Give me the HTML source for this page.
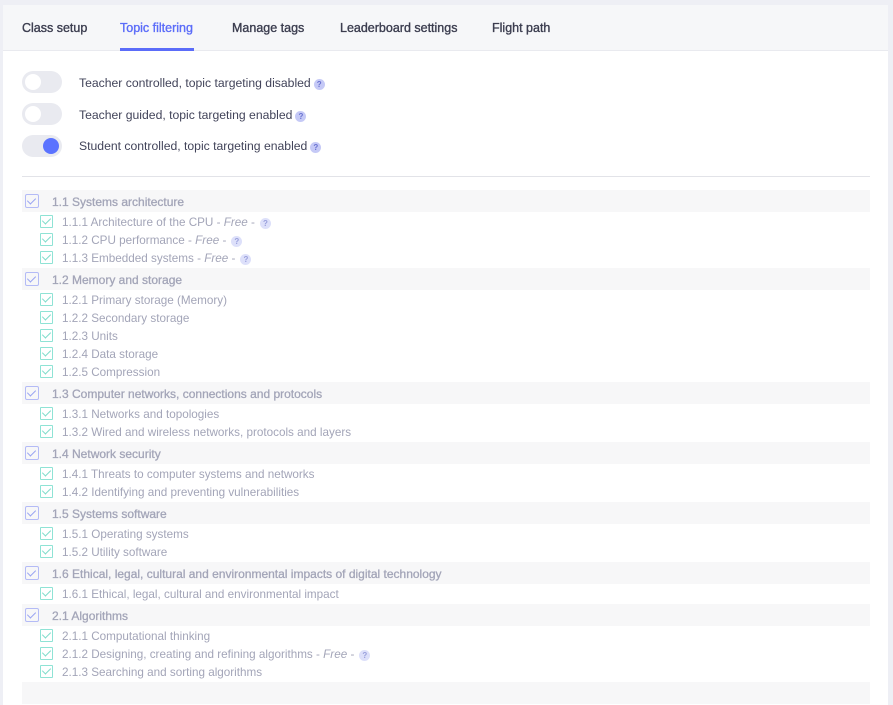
<!DOCTYPE html>
<html><head><style>
*{margin:0;padding:0;box-sizing:border-box}
body{width:893px;height:683px;overflow:hidden;background:#eeeff5;font-family:"Liberation Sans",sans-serif}
.card{position:absolute;left:3px;top:5px;width:885px;height:700px;background:#fff}
.tabs{height:46px;background:#f6f7f9;border-bottom:1px solid #e9eaef;position:relative}
.tab{position:absolute;top:16px;font-size:12.5px;color:#3b3d4f;-webkit-text-stroke:0.35px #3b3d4f}
.tab.a{color:#5b6cf9;-webkit-text-stroke:0.35px #5b6cf9}
.ul{position:absolute;left:117px;top:43px;width:74px;height:3px;background:#5b6cf9}
.tg{position:absolute;left:19px;width:40px;height:22px;border-radius:11px;background:#e9eaf0}
.tg i{position:absolute;left:3px;top:3px;width:16px;height:16px;border-radius:50%;background:#fff}
.tg.on i{left:21px;background:#5b73ff}
.lb{position:absolute;left:76px;font-size:12.2px;color:#42445a}
.q{display:inline-block;width:11px;height:11px;border-radius:50%;background:#c5c9f6;color:#6a72d0;font-size:8px;font-weight:bold;text-align:center;line-height:11px;vertical-align:0px;margin-left:3px;font-style:normal}
.hr{position:absolute;left:19px;top:171px;width:848px;height:1px;background:#e2e3e8}
.list{position:absolute;left:19px;top:184px;width:848px}
.h{height:22px;margin:1px 0;background:#f7f7f8;position:relative;font-size:12px;color:#a3a5b8;-webkit-text-stroke:0.3px #a3a5b8;line-height:24px;padding-left:30px}
.h b{position:absolute;left:3px;top:4px;width:14px;height:14px;border:1.5px solid #b4bbf6;border-radius:2px;-webkit-text-stroke:0}
.c{height:18px;position:relative;padding-left:40px;font-size:11.7px;color:#a3a5b8;line-height:20px}
.c b{position:absolute;left:18px;top:2px;width:13px;height:13px;border:1.5px solid #8fe3d5;border-radius:1px}
b::after{content:"";position:absolute;left:3px;top:1px;width:4px;height:7px;border:solid;border-width:0 1.5px 1.5px 0;transform:rotate(45deg)}
.h b::after{border-color:#9aa5f2}
.c b::after{border-color:#7fdccb;left:3px;top:0px}
.c .q,.h .q{background:#dde0fa;color:#9aa0dc;margin-left:5px}
</style></head><body>
<div class="card">
<div class="tabs">
<div class="tab" style="left:19px">Class setup</div>
<div class="tab a" style="left:117px">Topic filtering</div>
<div class="tab" style="left:229px">Manage tags</div>
<div class="tab" style="left:337px">Leaderboard settings</div>
<div class="tab" style="left:489px">Flight path</div>
<div class="ul"></div>
</div>
<div class="tg" style="top:66px"><i></i></div><div class="lb" style="top:71px">Teacher controlled, topic targeting disabled<span class="q">?</span></div>
<div class="tg" style="top:98px"><i></i></div><div class="lb" style="top:103px">Teacher guided, topic targeting enabled<span class="q">?</span></div>
<div class="tg on" style="top:130px"><i></i></div><div class="lb" style="top:134px">Student controlled, topic targeting enabled<span class="q">?</span></div>
<div class="hr"></div>
<div class="list">
<div class="h"><b></b>1.1 Systems architecture</div>
<div class="c"><b></b>1.1.1 Architecture of the CPU - <i>Free</i> -<span class="q">?</span></div>
<div class="c"><b></b>1.1.2 CPU performance - <i>Free</i> -<span class="q">?</span></div>
<div class="c"><b></b>1.1.3 Embedded systems - <i>Free</i> -<span class="q">?</span></div>
<div class="h"><b></b>1.2 Memory and storage</div>
<div class="c"><b></b>1.2.1 Primary storage (Memory)</div>
<div class="c"><b></b>1.2.2 Secondary storage</div>
<div class="c"><b></b>1.2.3 Units</div>
<div class="c"><b></b>1.2.4 Data storage</div>
<div class="c"><b></b>1.2.5 Compression</div>
<div class="h"><b></b>1.3 Computer networks, connections and protocols</div>
<div class="c"><b></b>1.3.1 Networks and topologies</div>
<div class="c"><b></b>1.3.2 Wired and wireless networks, protocols and layers</div>
<div class="h"><b></b>1.4 Network security</div>
<div class="c"><b></b>1.4.1 Threats to computer systems and networks</div>
<div class="c"><b></b>1.4.2 Identifying and preventing vulnerabilities</div>
<div class="h"><b></b>1.5 Systems software</div>
<div class="c"><b></b>1.5.1 Operating systems</div>
<div class="c"><b></b>1.5.2 Utility software</div>
<div class="h"><b></b>1.6 Ethical, legal, cultural and environmental impacts of digital technology</div>
<div class="c"><b></b>1.6.1 Ethical, legal, cultural and environmental impact</div>
<div class="h"><b></b>2.1 Algorithms</div>
<div class="c"><b></b>2.1.1 Computational thinking</div>
<div class="c"><b></b>2.1.2 Designing, creating and refining algorithms - <i>Free</i> -<span class="q">?</span></div>
<div class="c"><b></b>2.1.3 Searching and sorting algorithms</div>
<div class="h"></div>
</div>
</div>
</body></html>
